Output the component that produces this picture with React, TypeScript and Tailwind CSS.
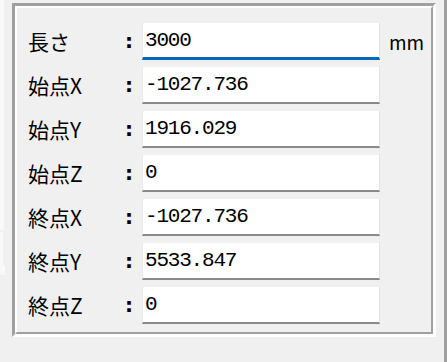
import React from "react";

const rows: { label: string; value: string; unit?: string; focused?: boolean }[] = [
  { label: "長さ", value: "3000", unit: "mm", focused: true },
  { label: "始点X", value: "-1027.736" },
  { label: "始点Y", value: "1916.029" },
  { label: "始点Z", value: "0" },
  { label: "終点X", value: "-1027.736" },
  { label: "終点Y", value: "5533.847" },
  { label: "終点Z", value: "0" }
];

const JP = { fontFamily: '"Noto Sans CJK JP", "Noto Sans", sans-serif' };
const NUM = { fontFamily: '"Liberation Mono", "DejaVu Sans Mono", monospace' };
const COLON = { fontFamily: '"DejaVu Sans", sans-serif' };

function FieldRow({ label, value, unit, focused }: (typeof rows)[number]) {
  return (
    <div className="flex h-[38px] items-center">
      <span className="w-[97px] text-[21px] leading-none text-black" style={JP}>
        {label}
      </span>
      <span className="w-[17px] pb-[1px] text-[20px] font-bold leading-none text-black" style={COLON}>
        :
      </span>
      {/* テキストボックス:フォーカス中は下線が青 */}
      <div
        className={`flex h-full w-[238px] items-center border-l border-r border-t border-l-[#ececec] border-r-[#e2e2e2] border-t-[#f0f0f0] bg-white pl-[2px] ${
          focused ? "border-b-[3px] border-b-[#0067c0]" : "border-b-2 border-b-[#8a8a8a]"
        }`}
      >
        <span className="text-[21px] leading-none tracking-[-1.2px] text-black" style={NUM}>
          {value}
        </span>
      </div>
      {unit ? (
        <span className="ml-[9px] text-[19px] leading-none text-black" style={JP}>
          {unit}
        </span>
      ) : null}
    </div>
  );
}

export default function App() {
  return (
    <div className="relative h-[362px] w-[447px] overflow-hidden bg-[#f0f0f0]">
      {/* 左端の別パネルの縁 */}
      <div className="absolute left-0 top-0 h-[230px] w-[4px] bg-[#f9f9f9]" />
      <div className="absolute left-0 top-[232px] h-[34px] w-[3px] bg-[#f9f9f9]" />
      <div className="absolute left-0 top-[265px] h-[10px] w-[5px] bg-[#f9f9f9]" />
      {/* 右端のウィンドウ枠 */}
      <div className="absolute right-0 top-0 h-full w-[3px] bg-[#a0a0a0]" />

      <div className="ml-[12px] mt-[3px] h-[334px] w-[424px] border-[3px] border-b-white border-l-[#a0a0a0] border-r-white border-t-[#a0a0a0]">
        <div className="flex h-full w-full flex-col gap-[6px] border-2 border-b-[#a0a0a0] border-l-white border-r-[#a0a0a0] border-t-white pl-[11px] pt-[14px]">
          {rows.map((r) => (
            <FieldRow key={r.label} {...r} />
          ))}
        </div>
      </div>
    </div>
  );
}
